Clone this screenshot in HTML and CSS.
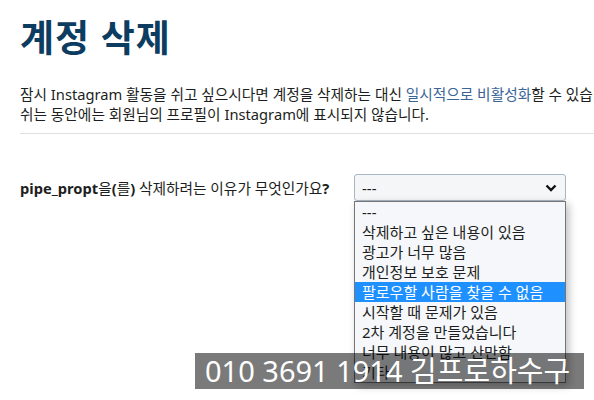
FILE: index.html
```html
<!doctype html>
<html lang="ko">
<head>
    <meta charset="UTF-8">
    <meta name="viewport" content="width=device-width, initial-scale=1.0">
    <title>계정 삭제</title>
    <link rel="stylesheet" href="styles.css">
</head>
<body>
<div class="page">
    <h1>계정 삭제</h1>
    <p class="intro">
        잠시 Instagram 활동을 쉬고 싶으시다면 계정을 삭제하는 대신 <a href="#">일시적으로 비활성화</a>할 수 있습니다.<br>
        쉬는 동안에는 회원님의 프로필이 Instagram에 표시되지 않습니다.
    </p>
    <hr>
    <form class="reason">
        <label for="reason"><b>pipe_propt</b>을<b>(</b>를<b>)</b> 삭제하려는 이유가 무엇인가요<b>?</b></label>
        <div class="select-wrap">
            <div class="select" id="reason">
                <span>---</span>
                <svg width="12" height="8" viewBox="0 0 12 8"><path d="M1.5 1.5 L6 6 L10.5 1.5" fill="none" stroke="#111" stroke-width="2.4"/></svg>
            </div>
            <ul class="options">
                <li>---</li>
                <li>삭제하고 싶은 내용이 있음</li>
                <li>광고가 너무 많음</li>
                <li>개인정보 보호 문제</li>
                <li class="hover">팔로우할 사람을 찾을 수 없음</li>
                <li>시작할 때 문제가 있음</li>
                <li>2차 계정을 만들었습니다</li>
                <li>너무 내용이 많고 산만함</li>
                <li>기타</li>
            </ul>
        </div>
    </form>
</div>
<div class="watermark">010 3691 1914 김프로하수구</div>
</body>
</html>
```

FILE: styles.css
```css
html, body {
    margin: 0;
    overflow: hidden;
    background: #fff;
}
body {
    font-family: "Noto Sans", "Noto Sans CJK KR", sans-serif;
    font-size: 14.7px;
    color: #1c1e21;
    width: 594px;
    height: 400px;
    position: relative;
}
.page {
    width: 660px;
    padding: 12px 0 0 20px;
}
h1 {
    margin: 0;
    font-size: 37px;
    line-height: 52px;
    font-weight: 700;
    color: #0d3c61;
    letter-spacing: 1px;
}
.intro {
    margin: 21px 0 0 0;
    line-height: 19.5px;
    white-space: nowrap;
}
.intro a {
    color: #3a6597;
    text-decoration: none;
}
hr {
    border: 0;
    border-top: 1px solid #dddfe2;
    margin: 9px 0 0 0;
}
.reason {
    display: flex;
    align-items: center;
    margin-top: 40px;
}
.reason label {
    width: 334px;
    font-weight: 400;
}
.select-wrap {
    position: relative;
    width: 212px;
    font-size: 15px;
}
.select {
    height: 25px;
    border: 1px solid #a8b6c6;
    border-radius: 3px;
    background: #f5f6f7;
    display: flex;
    align-items: center;
    justify-content: space-between;
    padding: 0 8px 0 7px;
}
.options {
    position: absolute;
    top: 27px;
    left: 0;
    width: 210px;
    margin: 0;
    padding: 0;
    list-style: none;
    background: #f5f7fa;
    border: 1px solid #767676;
    box-shadow: 3px 3px 8px rgba(0,0,0,0.25);
}
.options li {
    height: 20px;
    line-height: 20px;
    padding-left: 7px;
    white-space: nowrap;
}
.options li.hover {
    background: #1e90ff;
    color: #fff;
}
.watermark {
    position: absolute;
    left: 195px;
    top: 353px;
    width: 379px;
    height: 36px;
    padding-left: 10px;
    background: rgba(0,0,0,0.52);
    color: #fff;
    font-size: 29px;
    line-height: 36px;
}
```
